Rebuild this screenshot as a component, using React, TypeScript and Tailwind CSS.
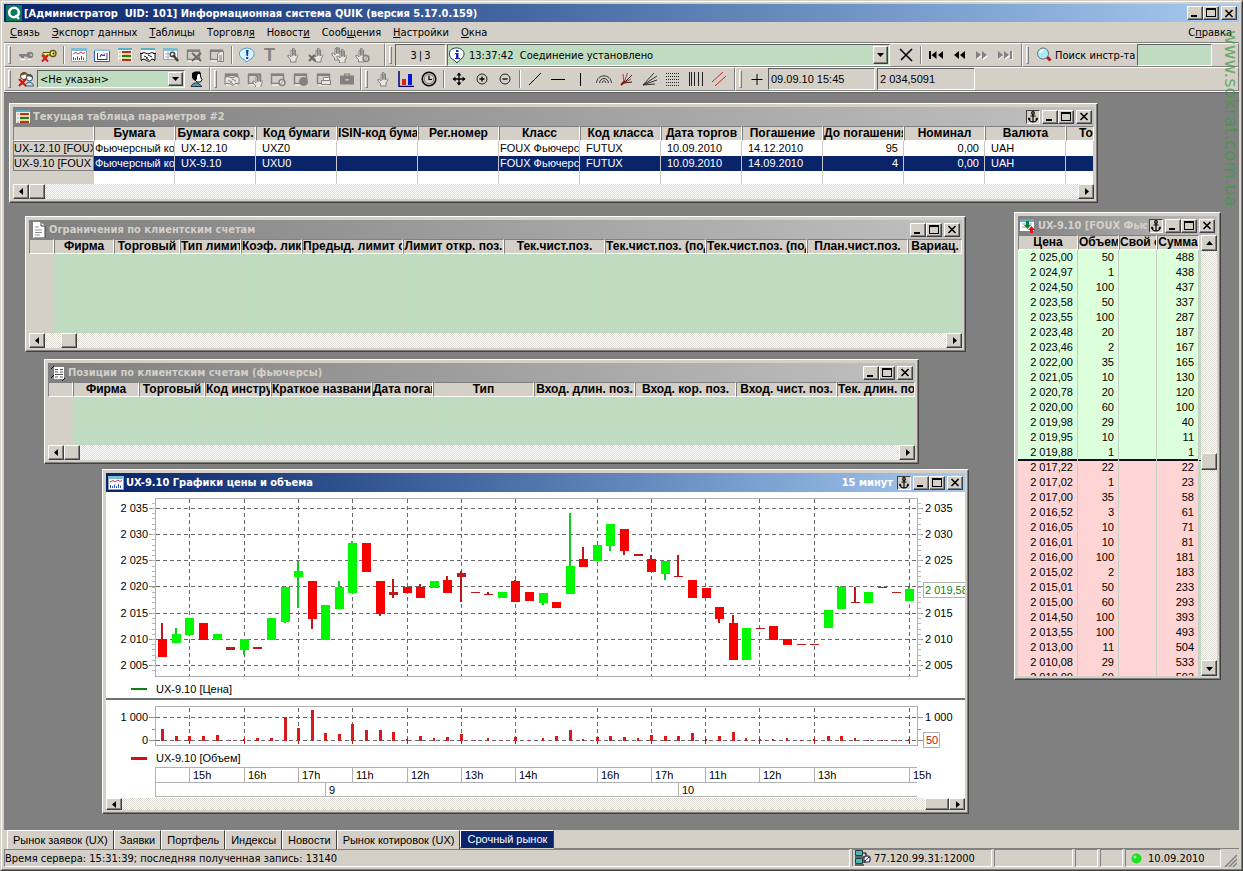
import React from "react";

type Kids = { children?: React.ReactNode };

const RAISED =
  "border border-t-white border-l-white border-r-[#404040] border-b-[#404040] shadow-[inset_-1px_-1px_0_#808080] bg-[#d4d0c8]";
const SUNKEN =
  "border border-t-[#606060] border-l-[#606060] border-r-white border-b-white";

/* ---------- window chrome ---------- */

function TitleButton({ label, children }: { label: string } & Kids) {
  return (
    <button aria-label={label} className={`${RAISED} flex h-[14px] w-[16px] items-center justify-center`}>
      {children}
    </button>
  );
}

function WindowButtons({ anchor }: { anchor?: boolean }) {
  return (
    <div className="flex shrink-0 items-center">
      {anchor && (
        <button
          aria-label="Закрепить"
          className="mr-[2px] flex h-[14px] w-[14px] items-center justify-center border border-t-[#404040] border-l-[#404040] border-r-white border-b-white bg-[#d4d0c8]"
        >
          <svg width="10" height="12" viewBox="0 0 10 12" fill="none" stroke="#000" strokeWidth="1.2">
            <circle cx="5" cy="2" r="1.3" />
            <path d="M5 3.3V11M2.5 5H7.500M1 7.500C1.300 10 3.500 11 5 11S8.700 10 9 7.500M.3 8.700L1 7.200 2.300 8.500M9.700 8.700L9 7.200 7.700 8.500" />
          </svg>
        </button>
      )}
      <TitleButton label="Свернуть">
        <svg width="10" height="10" viewBox="0 0 10 10"><path d="M1 7h6v2H1z" /></svg>
      </TitleButton>
      <TitleButton label="Развернуть">
        <svg width="10" height="10" viewBox="0 0 10 10" shapeRendering="crispEdges">
          <path fillRule="evenodd" d="M0 0h10v9H0zM1 2v6h8V2z" />
        </svg>
      </TitleButton>
      <div className="w-[2px]" />
      <TitleButton label="Закрыть">
        <svg width="10" height="9" viewBox="0 0 10 9" stroke="#000" strokeWidth="1.6"><path d="M1.500 1L8.500 8M8.500 1L1.500 8" /></svg>
      </TitleButton>
    </div>
  );
}

function Win({
  place,
  title,
  icon,
  active,
  anchor,
  note,
  children,
}: {
  place: string;
  title: string;
  icon: React.ReactNode;
  active?: boolean;
  anchor?: boolean;
  note?: string;
} & Kids) {
  return (
    <section aria-label={title} className={`absolute ${place} ${RAISED} flex flex-col p-[3px]`}>
      <header
        className={`flex h-[19px] shrink-0 items-center gap-[2px] bg-linear-to-r pr-[2px] pl-[2px] text-[11px] font-bold ${
          active ? "from-[#0a246a] to-[#a6caf0] text-white" : "from-[#808080] to-[#c0c0c0] text-[#d4d0c8]"
        }`}
      >
        {icon}
        <h2 className="min-w-0 flex-1 overflow-hidden whitespace-nowrap">{title}</h2>
        {note && <span className="pr-[2px]">{note}</span>}
        <WindowButtons anchor={anchor} />
      </header>
      {children}
    </section>
  );
}

const TRACK = "bg-[repeating-conic-gradient(#ffffff_0%_25%,#dedbd4_0%_50%)] bg-[length:2px_2px]";

function ScrollButton({ dir, size }: { dir: "left" | "right" | "up" | "down"; size: string }) {
  const d = {
    left: "M6 1v7L2 4.500z",
    right: "M3 1v7L7 4.500z",
    up: "M1 6h7L4.500 2z",
    down: "M1 3h7L4.500 7z",
  }[dir];
  return (
    <button aria-label={dir} className={`${RAISED} flex shrink-0 items-center justify-center ${size}`}>
      <svg width="9" height="9" viewBox="0 0 9 9"><path d={d} /></svg>
    </button>
  );
}

function HScroll({ before }: { before: string }) {
  return (
    <div className={`flex h-[15px] shrink-0 ${TRACK}`}>
      <ScrollButton dir="left" size="h-[15px] w-[16px]" />
      <div className={before} />
      <div className={`${RAISED} w-[16px]`} />
      <div className="ml-auto flex"><ScrollButton dir="right" size="h-[15px] w-[16px]" /></div>
    </div>
  );
}

/* ---------- icons ---------- */

type IconName =
  | "key" | "keyOff" | "chart" | "plot" | "list" | "deal" | "wrench" | "tableX" | "tableDoc"
  | "alert" | "hand" | "handX" | "hands" | "handStop" | "noUser" | "user" | "winDeal" | "winHand"
  | "winStop" | "winDot" | "winPrint" | "case" | "bars" | "clock" | "move" | "zoomIn" | "zoomOut"
  | "diag" | "horiz" | "vert" | "arcs" | "fanRed" | "fan" | "hlines" | "vlines" | "channel" | "plus"
  | "cross" | "first" | "prev" | "next" | "last" | "search";

const G = "#848280";
const HAND = "M5.500 15V12.500L3 10V8L4.500 8.500 6 10V3.500H7.500V8.500V1.500H9V8.500V3H10.500V9L12 7.500 13 8.500 11 12V15Z";
const HANDSHAKE = "M1 6.500L4 5.500 8 7 12 5.500 15 6.500V13L12 12 9 14.500 4 12 1 13ZM4 9L8 11M8 8L12 10M6 11L9 13";

function frame(extra: React.ReactNode) {
  return (
    <>
      <path d="M1.500 3.500H13.500V12.500H1.500Z" fill="#d4d0c8" stroke={G} strokeWidth="1.500" />
      <path d="M1 2.500H14V5H1Z" fill={G} />
      <path d="M2 14H13" stroke="#fff" />
      {extra}
    </>
  );
}

const ICONS: Record<IconName, React.ReactNode> = {
  key: <><circle cx="12" cy="8" r="3.300" fill={G} /><circle cx="13" cy="8" r="1" fill="#d4d0c8" /><path d="M1 7H10V9.500H6V11H3V9.500H1Z" fill={G} /><path d="M2 12.500H7M10 12.500H13" stroke="#fff" /></>,
  keyOff: <><circle cx="12" cy="6.500" r="3" fill="#ffff90" stroke="#5c5400" strokeWidth="1.300" /><circle cx="12.500" cy="6.500" r="1" fill="#000" /><path d="M9 5.500H2V8H4V10H6V8H9Z" fill="#ffff70" stroke="#5c5400" /><path d="M1 8L7 14.500M7 8L1 14.500" stroke="#d21c1c" strokeWidth="2" /></>,
  chart: <><path d="M.5 1.500H15.500V14.500H.5Z" fill="#fff" stroke="#8aa" /><path d="M0 1H16V4H0Z" fill="#7cbcd4" /><path d="M2 7L5 5.500 7 7 10 5 12 6.500 14 5.500" stroke="#d03060" fill="none" /><path d="M2.500 13V10M4.500 13V11M6.500 13V9.500M8.500 13V11M10.500 13V9M12.500 13V10.500" stroke="#3058b0" /></>,
  plot: <><path d="M.5 2.500H15.500V14.500H.5Z" fill="#fff" stroke="#3058b0" /><path d="M0 2H16V4H0Z" fill="#8cc8e0" /><path d="M3.500 6V12.500H13V6M6 10L7.500 7 9 9 11 6.500" stroke="#303090" fill="none" /><path d="M6 8.500H7.500M10 8.500H11" stroke="#c02020" /></>,
  list: <><path d="M1 2H15V14H1Z" fill="#f4f0e8" /><path d="M1 1H15V3H1Z" fill="#58b0c8" /><path d="M5 4H14V6H5ZM5 12H14V14H5Z" fill="#b03820" /><path d="M5 8H14V10H5Z" fill="#287828" /><path d="M5 7H14M5 11H14" stroke="#e8c048" /><path d="M2 5H4M2 9H4M2 13H4" stroke="#a0a8b0" /></>,
  deal: <><path d="M1 2H15V6H1Z" fill="#fff" /><path d="M1 1H15V3H1Z" fill="#58b0c8" /><path d={HANDSHAKE} fill="#fff" stroke="#000" strokeWidth=".9" /><path d="M0 6.500H3M13 6.500H16M1 14L3 12M15 14L13 12" stroke="#000" /></>,
  wrench: <><path d="M.5 2.500H14.500V12.500H.5Z" fill="#fff" stroke="#8aa" /><path d="M0 1H15V4H0Z" fill="#7cbcd4" /><path d="M2 7H7M2 10H7M5 4V12" stroke="#a0b0c0" /><path d="M10 8L15 14" stroke="#404040" strokeWidth="2.600" /><circle cx="9.500" cy="7.500" r="2.200" fill="none" stroke="#404040" strokeWidth="1.500" /></>,
  tableX: frame(<path d="M6 6L15 14M15 6L6 14" stroke="#6c6a68" strokeWidth="2" />),
  tableDoc: frame(<path d="M8.500 7L11 4.500H14.500V14.500H8.500ZM10 9H13M10 11H13M10 13H13" fill="#e8e6e0" stroke={G} />),
  alert: <><path d="M8 15L5 12.500C-1 10-1 4 4 2 10-.5 16 3 15 8 14 12 10 12.500 8 15Z" fill="#d8f4ff" stroke="#5898c0" /><path d="M7 3H9.500L9 9H7.500ZM7.200 10H9.200V12H7.200Z" fill="#1038b0" /></>,
  hand: <path d={HAND} fill="#e8e6e0" stroke={G} />,
  handX: <><path d={HAND} fill="#e8e6e0" stroke={G} transform="translate(2 0)" /><path d="M1 8L7 14M7 8L1 14" stroke="#6c6a68" strokeWidth="2" /></>,
  hands: <><path d={HAND} fill="#e8e6e0" stroke={G} transform="translate(-2 -2)" /><path d={HAND} fill="#e8e6e0" stroke={G} transform="translate(3 1)" /></>,
  handStop: <><path d={HAND} fill="#e8e6e0" stroke={G} transform="translate(-1 0)" /><circle cx="12" cy="11.500" r="3" fill="#d4d0c8" stroke={G} strokeWidth="1.600" /><path d="M10 13.500L14 9.500" stroke={G} /></>,
  noUser: <><circle cx="6" cy="5" r="3.500" fill="#fff" stroke="#5c3010" /><path d="M2 5C2 1 9-.5 10 4L7 3.500Z" fill="#7a4a20" /><circle cx="11.500" cy="7" r="3" fill="#fff" stroke="#204860" /><path d="M8 5C9 2 15 2 15 7L12 5.500Z" fill="#405058" /><path d="M7 15C8 10 15 10 15.500 15Z" fill="#b0dce8" stroke="#406070" /><path d="M1 8L8 15M8 8L1 15" stroke="#e01010" strokeWidth="2.200" /></>,
  user: <><path d="M6 2H11L12 7 13 8.500 11.500 11H8L6 9Z" fill="#fff" stroke="#000" /><path d="M3 2L6 .5H11L12 3H9L8 5V8L6 10 3 7Z" fill="#000" /><path d="M2 15.500C3 12.500 6 11.500 9 12L13 15.500Z" fill="#48a0b0" stroke="#203840" /></>,
  winDeal: frame(<path d={HANDSHAKE} fill="#e8e6e0" stroke={G} />),
  winHand: frame(<path d={HAND} fill="#e8e6e0" stroke={G} transform="translate(3 2)" />),
  winStop: frame(<><circle cx="12" cy="11.500" r="3" fill="#e8e6e0" stroke={G} strokeWidth="1.500" /><path d="M10 13.500L14 9.500" stroke={G} /></>),
  winDot: frame(<circle cx="10.500" cy="10.500" r="4.500" fill={G} />),
  winPrint: frame(<><path d="M5.500 9.500H14.500V13.500H5.500Z" fill="#e8e6e0" stroke={G} /><path d="M7.500 6.500H13.500V9.500H7.500Z" fill="#fff" stroke={G} /></>),
  case: <><path d="M1 4.500H5V2.500H11V4.500H15V13.500H1Z" fill={G} /><path d="M6.500 4.500V3.500H9.500V4.500ZM6.500 8H9.500V9.500H6.500Z" fill="#d4d0c8" /></>,
  bars: <><path d="M1 0V15.500H16" stroke="#000080" fill="none" strokeWidth="1.500" /><path d="M4 8H8V14H4Z" fill="#e02010" /><path d="M10 3H14V14H10Z" fill="#0818d0" /></>,
  clock: <><circle cx="8" cy="8" r="6.800" fill="none" stroke="#000" strokeWidth="1.500" /><circle cx="8" cy="8" r="4.800" fill="#d4d0c8" stroke="#555" strokeWidth=".7" /><path d="M8 4.500V8.500H11" stroke="#000" fill="none" strokeWidth="1.200" /></>,
  move: <><path d="M8 2V14M2 8H14" stroke="#000" strokeWidth="1.300" /><path d="M8 1.500L10.500 4.500H5.500ZM8 14.500L10.500 11.500H5.500ZM1.500 8L4.500 5.500V10.500ZM14.500 8L11.500 5.500V10.500Z" /></>,
  zoomIn: <><circle cx="8" cy="8" r="5" fill="none" stroke="#222" /><path d="M5.500 8H10.500M8 5.500V10.500" stroke="#000" strokeWidth="1.300" /></>,
  zoomOut: <><circle cx="8" cy="8" r="5" fill="none" stroke="#222" /><path d="M5.500 8H10.500" stroke="#000" strokeWidth="1.300" /></>,
  diag: <path d="M2 14L14 2" stroke="#000" />,
  horiz: <path d="M1 8.500H15" stroke="#000" />,
  vert: <path d="M7.500 2V15" stroke="#000" />,
  arcs: <path d="M.5 12C1 2.500 15 2.500 15.500 12M3.500 12C4 6 12 6 12.500 12M6 12C6.500 9 9.500 9 10 12" stroke="#333" fill="none" />,
  fanRed: <><path d="M5 12L13 4M5 12L13 11" stroke="#222" /><path d="M5 12L4 3M5 12L8.500 2M5 12L12 8" stroke="#c02020" strokeWidth=".9" /><path d="M2 14L6 10" stroke="#801010" strokeWidth="2" /></>,
  fan: <path d="M1 14L12 2M1 14L15 5M1 14L15 9M1 14L13 13" stroke="#333" fill="none" />,
  hlines: <path d="M1 2.500H15M1 5.500H15M1 8.500H15M1 11.500H15M1 14.500H15" stroke="#222" strokeDasharray="1 1" shapeRendering="crispEdges" />,
  vlines: <path d="M1.500 1V15M3.500 1V15M6.500 1V15M10.500 1V15M14.500 1V15" stroke="#222" />,
  channel: <path d="M1 11L12 1M4 15L15 5" stroke="#d42020" />,
  plus: <path d="M2.500 8.500H13.500M8 3V14" stroke="#000" />,
  cross: <path d="M2 2L14 14M14 2L3 13" stroke="#000" strokeWidth="1.600" />,
  first: <path d="M1 4H3V12H1ZM8.500 4V12L3.500 8ZM15 4V12L10 8Z" />,
  prev: <path d="M8 4V12L3 8ZM14 4V12L9 8Z" />,
  next: <><path d="M3 5V13L8 9ZM9 5V13L14 9Z" fill="#fff" /><path d="M2 4V12L7 8ZM8 4V12L13 8Z" fill={G} /></>,
  last: <><path d="M1 5V13L6 9ZM8 5V13L13 9ZM14 5H16V13H14Z" fill="#fff" /><path d="M1 4V12L6 8ZM7 4V12L12 8ZM13 4H15V12H13Z" fill={G} /></>,
  search: <><path d="M11 10L14.500 13.500" stroke="#c01020" strokeWidth="3" /><circle cx="7" cy="6.500" r="5.500" fill="#a8ecf8" stroke="#607078" /><path d="M4 6C4.500 4 6 3 8 3" stroke="#fff" strokeWidth="1.500" fill="none" /></>,
};

function Icon({ name }: { name: IconName }) {
  return <svg width="16" height="16" viewBox="0 0 16 16" className="shrink-0">{ICONS[name]}</svg>;
}

function Tool({ name }: { name: IconName }) {
  return (
    <button aria-label={name} className="flex w-[23px] shrink-0 items-center justify-center">
      <Icon name={name} />
    </button>
  );
}

function Sep() {
  return (
    <div className="flex w-[7px] shrink-0 justify-center py-[2px]">
      <div className="w-px bg-[#808080]" />
      <div className="w-px bg-white" />
    </div>
  );
}

function Band({ size, label, children }: { size: string; label: string } & Kids) {
  return (
    <div
      role="toolbar"
      aria-label={label}
      className={`flex min-w-0 border border-t-white border-l-white border-r-[#808080] border-b-[#808080] ${size}`}
    >
      <div className="flex w-[9px] shrink-0 pt-[2px] pb-[2px] pl-[3px]">
        <div className="w-[3px] border border-t-white border-l-white border-r-[#808080] border-b-[#808080]" />
      </div>
      {children}
    </div>
  );
}

function DropArrow() {
  return (
    <span className={`${RAISED} pointer-events-none absolute inset-y-px right-px flex w-[15px] items-center justify-center`}>
      <svg width="7" height="4" viewBox="0 0 7 4"><path d="M0 0H7L3.500 4Z" /></svg>
    </span>
  );
}

/* ---------- tables ---------- */

const TABLE = "w-full table-fixed border-separate border-spacing-0 font-['Liberation_Sans',sans-serif]";
const TH =
  "h-[15px] overflow-hidden whitespace-nowrap border border-t-[#808080] border-l-[#808080] border-r-white border-b-white bg-[#d4d0c8] p-0 text-center text-[12px] font-bold leading-[13px]";

const PARAM_HEADS = ["", "Бумага", "Бумага сокр.", "Код бумаги", "ISIN-код бумаги", "Рег.номер", "Класс", "Код класса", "Дата торгов", "Погашение", "До погашения", "Номинал", "Валюта", "Точность"];
const PARAM_ROWS = [
  ["UX-12.10 [FOUX", "Фьючерсный контракт", "UX-12.10", "UXZ0", "", "", "FOUX Фьючерсы", "FUTUX", "10.09.2010", "14.12.2010", "95", "0,00", "UAH", ""],
  ["UX-9.10 [FOUX", "Фьючерсный контракт", "UX-9.10", "UXU0", "", "", "FOUX Фьючерсы", "FUTUX", "10.09.2010", "14.09.2010", "4", "0,00", "UAH", ""],
];

function paramCell(col: number) {
  if (col === 1 || col === 6) return "pl-[1px]";
  if (col === 10 || col === 11) return "pr-[5px] text-right";
  return "pl-[6px]";
}

function ParamTable() {
  return (
    <table className={`${TABLE} bg-white`}>
      <colgroup>
        {PARAM_HEADS.slice(0, 13).map((h) => <col key={h} className="w-[81px]" />)}
        <col />
      </colgroup>
      <thead>
        <tr>
          {PARAM_HEADS.map((h, i) => (
            <th key={i} className={TH}><div className={i === 13 ? "pl-[12px] text-left" : ""}>{h}</div></th>
          ))}
        </tr>
      </thead>
      <tbody>
        {PARAM_ROWS.map((row, r) => (
          <tr key={r} className={r === 1 ? "bg-[#0a246a] text-white" : ""}>
            {row.map((c, i) =>
              i === 0 ? (
                <th key={i} scope="row" className="h-[15px] overflow-hidden border border-[#808080] bg-[#d4d0c8] p-0 text-left text-[11px] font-normal whitespace-nowrap leading-[13px] text-black">{c}</th>
              ) : (
                <td key={i} className={`h-[15px] overflow-hidden border-r border-[#c8c8c8] p-0 text-[11px] whitespace-nowrap leading-[15px] ${paramCell(i)}`}>{c}</td>
              )
            )}
          </tr>
        ))}
        <tr>
          {PARAM_HEADS.map((_, i) => <td key={i} className={i === 0 ? "h-[13px] bg-[#d4d0c8] p-0" : "h-[13px] border-r border-[#c8c8c8] p-0"} />)}
        </tr>
      </tbody>
    </table>
  );
}

type Col = { head: string; w: string };

function EmptyTable({ cols, body }: { cols: Col[]; body: string }) {
  return (
    <table className={`${TABLE} bg-[#c0dcc0]`}>
      <colgroup>{cols.map((c, i) => <col key={i} className={c.w} />)}</colgroup>
      <thead>
        <tr>{cols.map((c, i) => <th key={i} className={TH}>{c.head}</th>)}</tr>
      </thead>
      <tbody>
        <tr>{cols.map((_, i) => <td key={i} className={i === 0 ? `${body} bg-[#d4d0c8] p-0` : `${body} border-r border-[#c6d8c0] p-0`} />)}</tr>
      </tbody>
    </table>
  );
}

const LIMIT_COLS: Col[] = [
  { head: "", w: "w-[25px]" },
  { head: "Фирма", w: "w-[60px]" },
  { head: "Торговый", w: "w-[66px]" },
  { head: "Тип лимита", w: "w-[61px]" },
  { head: "Коэф. ликв.", w: "w-[61px]" },
  { head: "Предыд. лимит откр.", w: "w-[101px]" },
  { head: "Лимит откр. поз.", w: "w-[101px]" },
  { head: "Тек.чист.поз.", w: "w-[101px]" },
  { head: "Тек.чист.поз. (под", w: "w-[101px]" },
  { head: "Тек.чист.поз. (под", w: "w-[101px]" },
  { head: "План.чист.поз.", w: "w-[101px]" },
  { head: "Вариац.", w: "" },
];

const POS_COLS: Col[] = [
  { head: "", w: "w-[25px]" },
  { head: "Фирма", w: "w-[66px]" },
  { head: "Торговый", w: "w-[66px]" },
  { head: "Код инструм.", w: "w-[66px]" },
  { head: "Краткое название", w: "w-[101px]" },
  { head: "Дата погаш.", w: "w-[61px]" },
  { head: "Тип", w: "w-[101px]" },
  { head: "Вход. длин. поз.", w: "w-[101px]" },
  { head: "Вход. кор. поз.", w: "w-[101px]" },
  { head: "Вход. чист. поз.", w: "w-[101px]" },
  { head: "Тек. длин. поз.", w: "" },
];

const ASKS = [
  ["2 025,00", "50", "488"], ["2 024,97", "1", "438"], ["2 024,50", "100", "437"], ["2 023,58", "50", "337"],
  ["2 023,55", "100", "287"], ["2 023,48", "20", "187"], ["2 023,46", "2", "167"], ["2 022,00", "35", "165"],
  ["2 021,05", "10", "130"], ["2 020,78", "20", "120"], ["2 020,00", "60", "100"], ["2 019,98", "29", "40"],
  ["2 019,95", "10", "11"], ["2 019,88", "1", "1"],
];
const BIDS = [
  ["2 017,22", "22", "22"], ["2 017,02", "1", "23"], ["2 017,00", "35", "58"], ["2 016,52", "3", "61"],
  ["2 016,05", "10", "71"], ["2 016,01", "10", "81"], ["2 016,00", "100", "181"], ["2 015,02", "2", "183"],
  ["2 015,01", "50", "233"], ["2 015,00", "60", "293"], ["2 014,50", "100", "393"], ["2 013,55", "100", "493"],
  ["2 013,00", "11", "504"], ["2 010,08", "29", "533"], ["2 010,00", "60", "593"],
];

function BookRows({ rows, tone, rule }: { rows: string[][]; tone: string; rule?: boolean }) {
  return (
    <>
      {rows.map((r, i) => {
        const line = rule && i === rows.length - 1 ? "shadow-[inset_0_-1px_0_#101020]" : "";
        const td = `h-[15px] border-r border-[#c4d0c4] p-0 pr-[4px] leading-[15px] ${line}`;
        return (
          <tr key={r[0]} className={tone}>
            <td className={td}>{r[0]}</td>
            <td className={td}>{r[1]}</td>
            <td className={td} />
            <td className={td}>{r[2]}</td>
            <td className="bg-[#c0dcc0] p-0" />
          </tr>
        );
      })}
    </>
  );
}

function OrderBook() {
  return (
    <div className="flex min-h-0 flex-1">
      <div className="min-w-0 flex-1 overflow-hidden">
        <table className={`${TABLE} text-right text-[11px] whitespace-nowrap`}>
          <colgroup>
            <col className="w-[60px]" /><col className="w-[41px]" /><col className="w-[38px]" /><col className="w-[42px]" /><col className="w-[2px]" />
          </colgroup>
          <thead>
            <tr><th className={TH}>Цена</th><th className={TH}>Объем</th><th className={TH}>Свой объем</th><th className={TH}>Сумма</th><th className="bg-[#d4d0c8] p-0" /></tr>
          </thead>
          <tbody><BookRows rows={ASKS} tone="bg-[#dcffdc]" rule /></tbody>
          <tbody className="[&>tr:first-child>td]:shadow-[inset_0_1px_0_#101020]"><BookRows rows={BIDS} tone="bg-[#ffd4d4]" /></tbody>
        </table>
      </div>
      <div className={`flex w-[16px] shrink-0 flex-col ${TRACK}`}>
        <ScrollButton dir="up" size="h-[16px] w-[16px]" />
        <div className="grow-[51]" />
        <div className={`${RAISED} h-[17px]`} />
        <div className="grow-[48]" />
        <ScrollButton dir="down" size="h-[16px] w-[16px]" />
      </div>
    </div>
  );
}

/* ---------- price and volume chart ---------- */

type Candle = ["g" | "r", number, number, number?, number?];

/* colour, body top, body bottom, wick top, wick bottom: thirds of a pixel below the window's top edge */
const CANDLES: Candle[] = [
  ["r", 522, 575, 475, 575], ["g", 507, 533, 489, 533], ["g", 459, 509], ["r", 474, 524], ["g", 507, 524],
  ["r", 545, 554], ["g", 522, 554, 522, 571], ["r", 545, 551], ["g", 459, 524], ["g", 366, 470, 366, 475],
  ["g", 318, 335, 288, 429], ["r", 348, 461, 348, 491], ["g", 420, 524], ["g", 366, 431, 348, 431], ["g", 234, 383, 229, 383],
  ["r", 234, 320], ["r", 348, 446, 348, 452], ["r", 381, 389, 342, 398], ["r", 366, 383], ["r", 366, 398, 357, 398],
  ["g", 348, 368], ["r", 346, 383, 334, 383], ["r", 324, 335, 318, 410], ["r", 380, 383], ["r", 387, 390, 381, 390],
  ["g", 381, 398], ["r", 348, 410, 344, 410], ["r", 381, 407], ["g", 384, 413, 384, 419], ["r", 411, 428],
  ["g", 303, 386, 144, 386], ["r", 282, 305, 247, 305], ["g", 240, 287], ["g", 177, 242, 177, 257], ["r", 192, 257, 192, 271],
  ["r", 267, 272], ["r", 282, 320, 270, 320], ["g", 288, 326, 288, 344], ["r", 333, 336, 270, 336], ["r", 346, 398],
  ["r", 369, 398], ["r", 426, 461, 426, 475], ["r", 474, 586, 451, 586], ["g", 489, 584], ["r", 489, 492],
  ["r", 483, 524], ["r", 522, 539], ["r", 537, 540], ["r", 537, 540], ["g", 435, 488],
  ["g", 366, 431, 363, 431], ["r", 411, 414, 366, 414], ["g", 381, 413], ["r", 366, 369], ["r", 381, 384], ["g", 372, 407, 365, 407],
];

const VOLUMES = [
  37, 16, 14, 14, 19, 4, 6, 10, 10, 71, 40, 94, 25, 22, 52, 34, 34, 28, 5, 16, 8, 13, 22, 4, 8, 4, 11, 4, 8, 16, 33, 7,
  11, 16, 13, 8, 19, 15, 16, 23, 6, 14, 28, 8, 6, 6, 8, 4, 6, 14, 16, 8, 4, 4, 4, 7,
];

const HOURS: [number, string][] = [
  [189, "15h"], [244, "16h"], [298, "17h"], [352, "11h"], [407, "12h"], [461, "13h"], [515, "14h"],
  [597, "16h"], [651, "17h"], [705, "11h"], [759, "12h"], [814, "13h"], [909, "15h"],
];
const PRICES: [number, string][] = [
  [508, "2 035"], [534, "2 030"], [560, "2 025"], [586, "2 020"], [613, "2 015"], [639, "2 010"], [665, "2 005"],
];

function PriceChart() {
  const x = (i: number) => Math.round(162.3 + 13.58 * i);
  const y = (v: number) => Math.round(465 + v / 3);
  const minor: number[] = [];
  for (let k = -1; k <= 31; k++) minor.push(Math.round(508 + k * 5.24) + 0.5);
  const grid = { stroke: "#686868", strokeDasharray: "4 3" };
  return (
    <svg
      viewBox="106 492 859 306"
      role="img"
      aria-label="UX-9.10: цена и объем"
      className="min-h-0 w-full flex-1 bg-white font-['Liberation_Sans',sans-serif] text-[11px]"
      shapeRendering="crispEdges"
    >
      {HOURS.map(([gx]) => (
        <g key={gx}>
          <path d={`M${gx + 0.5} 499V676`} {...grid} />
          <path d={`M${gx + 0.5} 708V740`} {...grid} />
          <path d={`M${gx + 0.5} 738V744`} stroke="#c01010" />
        </g>
      ))}
      {PRICES.map(([gy, t]) => (
        <g key={gy}>
          <path d={`M156 ${gy + 0.5}H917`} {...grid} />
          <path d={`M149 ${gy + 0.5}H156M917 ${gy + 0.5}H923`} stroke="#909090" />
          <text x="148" y={gy + 4} textAnchor="end">{t}</text>
          {t !== "2 020" && <text x="925" y={gy + 4}>{t}</text>}
        </g>
      ))}
      <path d={minor.map((m) => `M152 ${m}H155M918 ${m}H921`).join("")} stroke="#b8b8b8" />
      <path d="M155.500 498.500H917.500V676.500H155.500Z" fill="none" stroke="#b0b0b0" />
      {CANDLES.map(([c, t, b, wt, wb], i) => (
        <g key={i} fill={c === "g" ? "#00f800" : "#f80000"}>
          {wt !== undefined && wb !== undefined && (
            <rect x={x(i) - 1} y={y(wt)} width="2" height={y(wb) - y(wt)} fill={c === "g" ? "#10c820" : "#c01818"} />
          )}
          <rect x={x(i) - 4} y={y(t)} width="9" height={Math.max(1, y(b) - y(t))} fill={b - t < 12 ? "#c01818" : undefined} />
        </g>
      ))}
      <path d="M131 689H147" stroke="#108010" strokeWidth="2" />
      <text x="156" y="693">UX-9.10 [Цена]</text>
      <path d="M923.500 582.500H970V597.500H923.500Z" fill="#fff" stroke="#b0b0b0" />
      <text x="925" y="594" fill="#108010">2 019,58</text>

      <path d="M106 699H965" stroke="#707070" strokeWidth="2" />
      <path d="M155.500 706.500H917.500V745.500H155.500Z" fill="none" stroke="#b0b0b0" />
      <path d="M156 717.500H917M156 740.500H917" {...grid} />
      <path d="M149 717.500H156M149 740.500H156M152 729.500H155M917 717.500H923M917 740.500H923M918 729.500H921" stroke="#909090" />
      <text x="148" y="721" textAnchor="end">1 000</text>
      <text x="925" y="721">1 000</text>
      <text x="148" y="744" textAnchor="end">0</text>
      {VOLUMES.map((v, i) => {
        const h = Math.round(v / 3);
        return <rect key={i} x={x(i) - 1} y={741 - h} width={v > 9 ? 3 : 2} height={h} fill="#d41c1c" />;
      })}
      <path d="M923.500 732.500H939.500V747.500H923.500Z" fill="#fff" stroke="#b0b0b0" />
      <text x="926" y="744" fill="#c01010">50</text>
      <path d="M131 758.500H147" stroke="#d01010" strokeWidth="3" />
      <text x="156" y="762">UX-9.10 [Объем]</text>

      <path d="M917 767.500H155.500V797M156 782.500H917M156 796.500H917" fill="none" stroke="#b0b0b0" />
      {HOURS.map(([gx, t]) => (
        <g key={gx}>
          <path d={`M${gx + 0.5} 768V782`} stroke="#b0b0b0" />
          <text x={gx + 4} y="779">{t}</text>
        </g>
      ))}
      <path d="M325.500 783V797M678.500 783V797" stroke="#b0b0b0" />
      <text x="329" y="794">9</text>
      <text x="682" y="794">10</text>
    </svg>
  );
}

/* ---------- page ---------- */

const MENU: [string, string, string][] = [
  ["", "С", "вязь"], ["", "Э", "кспорт данных"], ["", "Т", "аблицы"], ["Торговл", "я", ""], ["Новост", "и", ""],
  ["Сооб", "щ", "ения"], ["", "Н", "астройки"], ["", "О", "кна"],
];
const TABS = ["Рынок заявок (UX)", "Заявки", "Портфель", "Индексы", "Новости", "Рынок котировок (UX)"];

const T1: IconName[] = ["chart", "plot", "list", "deal", "wrench", "tableX", "tableDoc"];
const T2: IconName[] = ["hand", "handX", "hands", "handStop"];
const T3: IconName[] = ["winDeal", "winHand", "winStop", "winDot", "winPrint", "case"];
const T4: IconName[] = ["diag", "horiz", "vert", "arcs", "fanRed", "fan", "hlines", "vlines", "channel"];

function StatusPane({ size, children }: { size: string } & Kids) {
  return (
    <div className={`flex items-center gap-[3px] border border-t-[#808080] border-l-[#808080] border-r-white border-b-white whitespace-nowrap ${size}`}>
      {children}
    </div>
  );
}

export default function App() {
  return (
    <div className="relative flex min-h-screen w-full flex-col border border-[#d4d0c8] border-r-[#404040] border-b-[#404040] bg-[#d4d0c8] font-['DejaVu_Sans_Condensed','Noto_Sans',sans-serif] text-[11px] leading-[13px] text-black">
      <div className="flex flex-1 flex-col border border-t-white border-l-white border-r-[#808080] border-b-[#808080] px-[2px] pt-[2px]">
        <header className="flex h-[18px] items-center gap-[2px] bg-linear-to-r from-[#0a246a] to-[#a6caf0] px-[2px] font-bold text-white">
          <svg width="16" height="16" viewBox="0 0 16 16">
            <path d="M0 0H16V16H0Z" fill="#087860" />
            <circle cx="8" cy="7.500" r="4.800" fill="none" stroke="#fff" strokeWidth="2.600" />
            <path d="M9.500 10L13 14" stroke="#fff" strokeWidth="2.400" />
          </svg>
          <h1 className="flex-1 whitespace-pre text-[11px]">{"[Администратор  UID: 101] Информационная система QUIK (версия 5.17.0.159)"}</h1>
          <WindowButtons />
        </header>

        <nav className="flex h-[20px] items-center gap-[12px] pr-[7px] pl-[6px]">
          {MENU.map(([a, u, b]) => (
            <button key={a + u + b} className="whitespace-nowrap">{a}<u>{u}</u>{b}</button>
          ))}
          <button className="ml-auto">С<u>п</u>равка</button>
        </nav>

        <div className="flex h-[25px] border-t border-[#808080]">
          <Band size="w-[381px] shrink-0" label="Таблицы">
            <Tool name="key" /><Tool name="keyOff" /><Sep />
            {T1.map((n) => <Tool key={n} name={n} />)}
            <Sep /><Tool name="alert" />
            <button className="w-[23px] font-['Liberation_Sans',sans-serif] text-[18px] font-bold text-[#848280]">T</button>
            {T2.map((n) => <Tool key={n} name={n} />)}
          </Band>
          <Band size="flex-1" label="Сообщения">
            <div className={`${SUNKEN} flex w-[51px] shrink-0 items-center justify-center gap-[2px]`}>
              <span>3</span><span>|</span><span>3</span>
            </div>
            <div className={`${SUNKEN} relative ml-px flex min-w-0 flex-1 items-center bg-[#c0dcc0]`}>
              <svg width="16" height="17" viewBox="0 0 16 17" className="ml-px shrink-0">
                <path d="M8 16L5 13C-1 11-1 3 4 1.500 10-.5 16 3 15 8 14 12 10 12.500 8 16Z" fill="#fff" stroke="#304050" />
                <path d="M7 3H9.500V5H7ZM6 6H9.500V11H11V12H6V11H7V7H6Z" fill="#1028c8" />
              </svg>
              <select aria-label="Сообщение" className="h-full min-w-0 flex-1 appearance-none bg-transparent pl-[4px]">
                <option>{"13:37:42\u00a0 Соединение установлено"}</option>
              </select>
              <DropArrow />
            </div>
            <div className="w-[4px]" /><Tool name="cross" /><Sep />
            <Tool name="first" /><Tool name="prev" /><Tool name="next" /><Tool name="last" />
            <div className="w-[5px]" />
          </Band>
          <Band size="w-[217px] shrink-0" label="Поиск">
            <Tool name="search" />
            <label htmlFor="find" className="w-[80px] self-center whitespace-nowrap">Поиск инстр-та</label>
            <input id="find" className={`${SUNKEN} mr-[26px] ml-[2px] min-w-0 flex-1 bg-[#c0dcc0] px-1`} />
          </Band>
        </div>

        <div className="flex h-[25px] border-b border-white">
          <Band size="w-[206px] shrink-0" label="Счет">
            <Tool name="noUser" />
            <div className={`${SUNKEN} relative my-[2px] flex w-[148px] bg-[#c0dcc0]`}>
              <select aria-label="Счет" className="w-full appearance-none bg-transparent pl-[2px]"><option>&lt;Не указан&gt;</option></select>
              <DropArrow />
            </div>
            <Tool name="user" />
          </Band>
          <Band size="w-[151px] shrink-0" label="Окна сделок">{T3.map((n) => <Tool key={n} name={n} />)}</Band>
          <Band size="w-[374px] shrink-0" label="График">
            <Tool name="hand" /><Tool name="bars" /><Tool name="clock" /><Sep />
            <Tool name="move" /><Tool name="zoomIn" /><Tool name="zoomOut" /><Sep />
            {T4.map((n) => <Tool key={n} name={n} />)}
          </Band>
          <Band size="flex-1" label="Курсор">
            <Tool name="plus" />
            <input readOnly aria-label="Время" value="09.09.10 15:45" className={`${SUNKEN} w-[107px] pl-[2px] font-['Liberation_Sans',sans-serif] text-[11px]`} />
            <input readOnly aria-label="Цена" value="2 034,5091" className={`${SUNKEN} ml-[2px] w-[98px] pl-[2px] font-['Liberation_Sans',sans-serif] text-[11px]`} />
          </Band>
        </div>

        <main className="relative min-h-[730px] flex-1 overflow-hidden border-t border-[#606060] bg-[#808080]">
          <Win place="left-[5px] top-[10px] w-[1089px]" title="Текущая таблица параметров #2" icon={<Icon name="list" />} anchor>
            <ParamTable />
            <HScroll before="w-0" />
          </Win>
          <Win
            place="left-[21px] top-[123px] w-[941px]"
            title="Ограничения по клиентским счетам"
            icon={<svg width="16" height="16" viewBox="0 0 16 16"><path d="M2 0H10L14 4V16H2Z" fill="#fff" /><path d="M10 0V4H14V16H3" stroke="#404040" fill="none" /><path d="M4 5H8M4 8H11M4 10.500H11M4 13H9" stroke="#909090" /></svg>}
          >
            <EmptyTable cols={LIMIT_COLS} body="h-[79px]" />
            <HScroll before="w-[16px]" />
          </Win>
          <Win
            place="left-[40px] top-[266px] w-[875px]"
            title="Позиции по клиентским счетам (фьючерсы)"
            icon={<svg width="16" height="16" viewBox="0 0 16 16"><path d="M4 2H14V14H4Z" fill="#fff" /><path d="M5 4.500H8M10 4.500H13M5 7H8M10 7H13M5 9.500H13M5 12H8M10 12H13" stroke="#505050" strokeWidth="1.200" /><path d="M1 4L4 1M1 13L4 10M12 16L15 13" stroke="#000" /></svg>}
          >
            <EmptyTable cols={POS_COLS} body="h-[48px]" />
            <HScroll before="w-0" />
          </Win>
          <Win place="left-[98px] top-[376px] w-[867px] h-[345px]" title="UX-9.10 Графики цены и объема" icon={<Icon name="chart" />} active anchor note="15 минут">
            <PriceChart />
            <div className={`flex h-[12px] shrink-0 ${TRACK}`}>
              <ScrollButton dir="left" size="h-[12px] w-[16px]" />
              <div className={`${RAISED} ml-auto w-[24px]`} />
              <ScrollButton dir="right" size="h-[12px] w-[16px]" />
            </div>
          </Win>
          <Win
            place="left-[1010px] top-[119px] w-[207px] h-[468px]"
            title="UX-9.10 [FOUX Фьючерсы]"
            icon={<svg width="16" height="16" viewBox="0 0 16 16" className="shrink-0"><path d="M0 1H14V13H0Z" fill="#fff" /><path d="M0 1H14V4H0Z" fill="#58b0c8" /><path d="M2 6H12M2 9H8" stroke="#90a0b0" /><path d="M6 3H9V7H11L7.500 11 4 7H6Z" fill="#108030" /><path d="M10 15V12H8L11.500 8 15 12H13V15Z" fill="#d81818" /></svg>}
            anchor
          >
            <OrderBook />
          </Win>
        </main>

        <div role="tablist" className="flex h-[19px] shrink-0 font-['Liberation_Sans',sans-serif] text-[11px]">
          <div className="w-[3px]" />
          {TABS.map((t) => (
            <button key={t} role="tab" aria-selected={false} className="border-t border-r border-l border-t-white border-l-white border-r-[#404040] px-[5px] whitespace-nowrap">
              {t}
            </button>
          ))}
          <button role="tab" aria-selected className="mb-px border border-t-white border-l-white border-r-[#404040] border-b-[#0a246a] bg-[#0a246a] px-[6px] whitespace-nowrap text-white">Срочный рынок</button>
          <div className="flex-1 border-b border-[#808080]" />
        </div>

        <footer className="flex h-[20px] shrink-0 gap-[2px] pb-[2px]">
          <StatusPane size="min-w-0 flex-1 overflow-hidden">Время сервера: 15:31:39; последняя полученная запись: 13140</StatusPane>
          <StatusPane size="w-[140px] pl-[2px]">
            <svg width="16" height="16" viewBox="0 0 16 16">
              <path d="M.5.500H7.500V5.500H.5ZM.5 8.500H7.500V13.500H.5Z" fill="#48b8b0" stroke="#204040" /><path d="M0 7H9M0 15H9" stroke="#404040" strokeWidth="1.500" />
              <path d="M8 3H11V6M8 12H11V10" stroke="#000" fill="none" /><circle cx="12" cy="9" r="3.200" fill="#fff" stroke="#303060" strokeWidth="1.300" /><path d="M10 11L14 7" stroke="#303060" />
            </svg>
            77.120.99.31:12000
          </StatusPane>
          <StatusPane size="w-[79px]" />
          <StatusPane size="w-[23px]" />
          <StatusPane size="w-[23px]" />
          <StatusPane size="w-[96px] pl-[5px]">
            <svg width="11" height="11" viewBox="0 0 11 11"><circle cx="5.500" cy="5.500" r="5" fill="#20e020" /><circle cx="4" cy="4" r="1.500" fill="#a0ffa0" /></svg>
            <span className="pl-[3px]">10.09.2010</span>
          </StatusPane>
          <div className="flex w-[16px] items-end">
            <svg width="14" height="14" viewBox="0 0 14 14" stroke="#808080" strokeWidth="1.500"><path d="M2 14L14 2M6 14L14 6M10 14L14 10" /></svg>
          </div>
        </footer>
      </div>

      <div
        className="pointer-events-none absolute top-[29px] right-[1px] font-['DejaVu_Sans',sans-serif] text-[18px] leading-[20px] text-[#3c9a3c]/70 [writing-mode:vertical-rl]"
      >
        www.sokrat.com.ua
      </div>
    </div>
  );
}
